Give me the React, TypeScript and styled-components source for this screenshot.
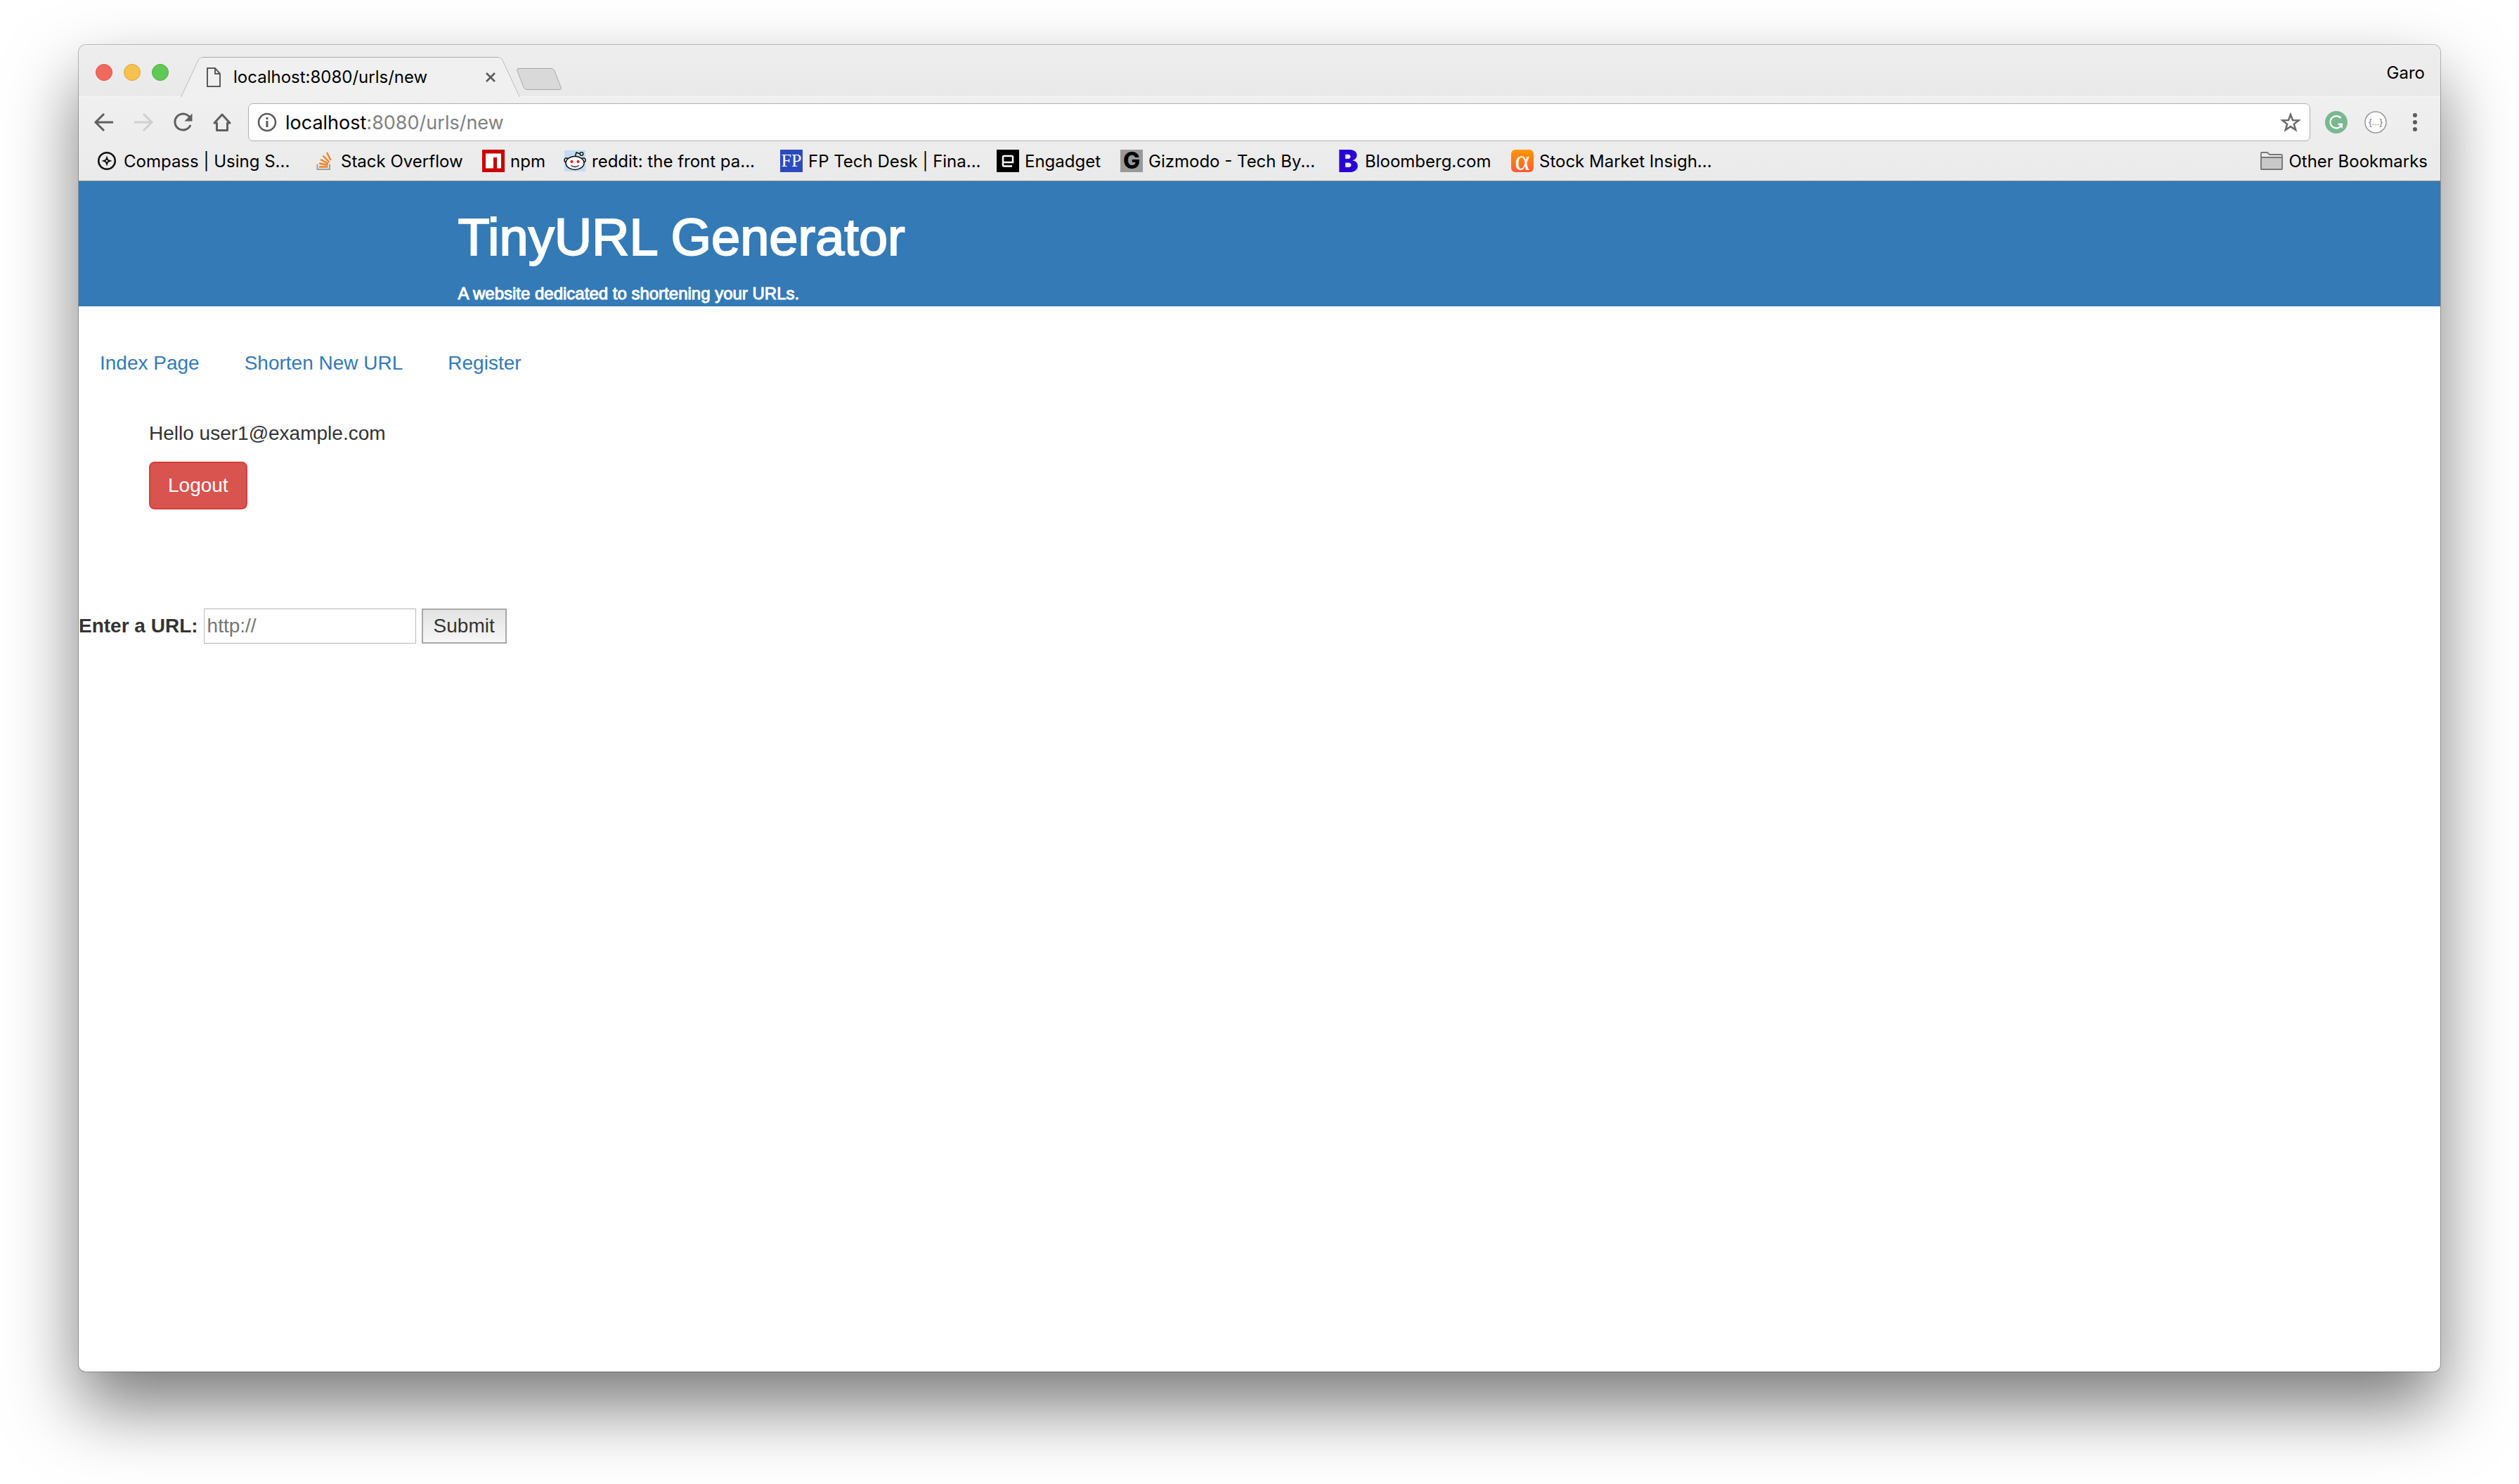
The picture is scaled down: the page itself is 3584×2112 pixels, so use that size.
import React from 'react';
import styled, { createGlobalStyle } from 'styled-components';

const uiFont = 'Inter, Roboto, sans-serif';
const pageFont = '"Helvetica Neue", "Liberation Sans", Arial, sans-serif';

const GlobalStyle = createGlobalStyle`
  *, *::before, *::after { box-sizing: border-box; }
  body { margin: 0; background: #fff; }
  button, input { font: inherit; margin: 0; }
`;

const Desktop = styled.div`
  min-height: 100vh;
  padding: 64px 112px 160px;
  display: flex;
`;

const BrowserWindow = styled.div`
  flex: 1;
  min-width: 0;
  display: flex;
  flex-direction: column;
  border-radius: 10px;
  overflow: hidden;
  background: #fff;
  box-shadow: 0 0 0 1px rgba(0, 0, 0, 0.25), 0 50px 100px rgba(0, 0, 0, 0.52);
`;

const TitleBar = styled.header`
  display: flex;
  align-items: flex-end;
  height: 74px;
  padding: 0 22px 0 24px;
  background: linear-gradient(#eeeeee, #e9e9e9);
  border-top: 1px solid #f6f6f6;
  border-bottom: 1px solid #f5f5f5;
  font-family: ${uiFont};
`;

const WindowButtons = styled.div`
  align-self: center;
  display: flex;
  gap: 16px;
  margin: 4px 17px 0 0;
`;

const WindowButton = styled.button<{ $fill: string; $edge: string }>`
  width: 24px;
  height: 24px;
  padding: 0;
  border: 1px solid ${(p) => p.$edge};
  border-radius: 50%;
  background: ${(p) => p.$fill};
`;

const Tab = styled.div`
  position: relative;
  display: flex;
  align-items: center;
  width: 483px;
  height: 57px;
  margin-bottom: -1px;
  padding: 0 35px 0 37px;

  &::before,
  &::after {
    content: '';
    position: absolute;
    top: 0;
    bottom: 0;
    width: 60%;
    background: #f0f0f0;
    border: 1px solid #a9a9a9;
    border-bottom: 0;
    transform-origin: bottom;
  }
  &::before {
    left: 0;
    border-right: 0;
    border-top-left-radius: 6px;
    transform: skewX(-25deg);
  }
  &::after {
    right: 0;
    border-left: 0;
    border-top-right-radius: 6px;
    transform: skewX(25deg);
  }
  & > * {
    position: relative;
    z-index: 1;
  }
`;

const TabTitle = styled.span`
  flex: 1;
  margin-left: 18px;
  font-size: 24px;
  line-height: 32px;
  color: #000;
`;

const IconButton = styled.button`
  display: flex;
  padding: 0;
  border: 0;
  background: none;
`;

const NewTab = styled.button`
  align-self: center;
  width: 54px;
  height: 31px;
  margin-top: 23px;
  padding: 0;
  border: 1px solid #a9a9a9;
  border-radius: 4px;
  background: #d9d9d9;
  transform: skewX(21deg);
`;

const Profile = styled.span`
  align-self: center;
  margin: 6px 0 0 auto;
  font-size: 24px;
  line-height: 32px;
  color: #000;
`;

const Chrome = styled.div`
  background: linear-gradient(#f0f0f0, #eaeaea);
  border-bottom: 1px solid #8a8a8a;
  font-family: ${uiFont};
`;

const Toolbar = styled.div`
  display: flex;
  align-items: center;
  padding: 9px 20px 0;
`;

const NavButtons = styled.div`
  display: flex;
  gap: 24px;
  margin-right: 21px;
`;

const Omnibox = styled.div`
  flex: 1;
  display: flex;
  align-items: center;
  height: 54px;
  padding: 0 12px;
  background: #fff;
  border: 1px solid #b0b0b0;
  border-radius: 7px;
`;

const Address = styled.span`
  flex: 1;
  margin-left: 12px;
  padding-top: 2px;
  font-size: 27px;
  line-height: 36px;
  color: #808080;
`;

const Host = styled.span`
  color: #000;
`;

const Extensions = styled.div`
  display: flex;
  align-items: center;
  gap: 24px;
  margin-left: 21px;
`;

const BookmarksBar = styled.nav`
  display: flex;
  align-items: center;
  height: 56px;
  padding: 0 18px 0 24px;
`;

const Bookmark = styled.a<{ $width?: number }>`
  display: flex;
  align-items: center;
  gap: 8px;
  flex: 0 0 ${(p) => (p.$width ? `${p.$width}px` : 'auto')};
  font-size: 24px;
  line-height: 32px;
  white-space: nowrap;
  color: #000;
  text-decoration: none;

  &:last-child {
    margin-left: auto;
  }
`;

const BookmarkLabel = styled.span`
  padding-top: 2px;
`;

const Tile = styled.span<{ $bg?: string; $fg?: string; $size: number; $face?: string; $weight?: number; $radius?: number; $line?: number }>`
  display: flex;
  align-items: center;
  justify-content: center;
  width: 32px;
  height: 32px;
  border-radius: ${(p) => p.$radius ?? 0}px;
  background: ${(p) => p.$bg ?? 'none'};
  color: ${(p) => p.$fg ?? '#fff'};
  font-family: ${(p) => p.$face ?? 'Inter'}, sans-serif;
  font-size: ${(p) => p.$size}px;
  font-weight: ${(p) => p.$weight ?? 400};
  line-height: ${(p) => p.$line ?? 32}px;
`;

const Page = styled.main`
  flex: 1;
  font-family: ${pageFont};
  font-size: 28px;
  line-height: 40px;
  color: #333;
`;

const Banner = styled.div`
  padding: 40px 16% 4px;
  background: #337ab7;
  color: #fff;
`;

const BannerInner = styled.div`
  padding-left: 2px;
`;

const Title = styled.h1`
  margin: 0 0 26px;
  font-size: 74px;
  line-height: 80px;
  font-weight: 400;
  -webkit-text-stroke: 2px #fff;
`;

const Tagline = styled.h2`
  margin: 0;
  font-size: 24px;
  line-height: 28px;
  font-weight: 400;
  -webkit-text-stroke: 1px #fff;
`;

const Menu = styled.nav`
  display: flex;
  gap: 4px;
  padding-top: 41px;
`;

const MenuLink = styled.a`
  padding: 20px 30px;
  color: #337ab7;
  text-decoration: none;
`;

const Account = styled.section`
  padding: 40px 100px 0;
`;

const Greeting = styled.p`
  margin: 0 0 20px;
`;

const Logout = styled.button`
  height: 68px;
  padding: 0 25px;
  border: 2px solid #d43f3a;
  border-radius: 8px;
  background: #d9534f;
  color: #fff;
`;

const ShortenForm = styled.form`
  display: flex;
  align-items: center;
  gap: 8px;
  margin-top: 141px;
`;

const UrlLabel = styled.label`
  font-weight: 700;
`;

const UrlInput = styled.input`
  width: 302px;
  height: 50px;
  padding: 0 4px;
  border: 1px solid #b8b8b8;
  color: #333;

  &::placeholder {
    color: #757575;
  }
`;

const Submit = styled.button`
  height: 50px;
  padding: 0 15px;
  border: 2px solid #a9a9a9;
  background: linear-gradient(#e2e2e2, #f7f7f7);
  color: #333;
`;

const DocIcon = () => (
  <svg width="20" height="28" viewBox="0 0 20 28" fill="none" stroke="#5a5a5a" strokeWidth="2">
    <path d="M1 1h11l7 8v18H1z" />
    <path d="M12 1v8h7" />
  </svg>
);

const CloseIcon = () => (
  <svg width="14" height="14" viewBox="0 0 14 14" stroke="#5a5a5a" strokeWidth="2.500">
    <path d="M1 1l12 12M13 1L1 13" />
  </svg>
);

const BackIcon = () => (
  <svg width="32" height="32" viewBox="0 0 32 32" fill="none" stroke="#5f5f5f" strokeWidth="3">
    <path d="M16 4L4 16l12 12M4 16h25" />
  </svg>
);

const ForwardIcon = () => (
  <svg width="32" height="32" viewBox="0 0 32 32" fill="none" stroke="#d0d0d0" strokeWidth="3">
    <path d="M16 4l12 12-12 12M28 16H3" />
  </svg>
);

const ReloadIcon = () => (
  <svg width="32" height="32" viewBox="0 0 32 32" fill="none">
    <path d="M25.500 8.500A11.500 11.500 0 1 0 27 20" stroke="#5f5f5f" strokeWidth="3" />
    <path d="M29.500 3.500v11h-11z" fill="#5f5f5f" />
  </svg>
);

const HomeIcon = () => (
  <svg width="32" height="32" viewBox="0 0 32 32" fill="none" stroke="#5f5f5f" strokeWidth="3" strokeLinejoin="round">
    <path d="M16 5L5 17h3.500v10.500h15V17H27z" />
  </svg>
);

const InfoIcon = () => (
  <svg width="28" height="28" viewBox="0 0 28 28" fill="none" stroke="#5a5a5a">
    <circle cx="14" cy="14" r="12" strokeWidth="2.500" />
    <path d="M14 12v9" strokeWidth="3" />
    <path d="M14 7v3" strokeWidth="3" />
  </svg>
);

const StarIcon = () => (
  <svg width="30" height="30" viewBox="0 0 30 30" fill="none" stroke="#6a6a6a" strokeWidth="2.500">
    <path d="M15 4l3 8 8.600.300-6.800 5.300 2.400 8.300-7.200-4.800-7.200 4.800 2.400-8.300-6.800-5.300L12 12z" />
  </svg>
);

const GrammarIcon = () => (
  <svg width="32" height="32" viewBox="0 0 32 32" fill="none">
    <circle cx="16" cy="16" r="16" fill="#78b98f" />
    <path d="M22.500 10A8.600 8.600 0 1 0 24 19h-5.500" stroke="#fff" strokeWidth="2.200" />
    <path d="M25 17.500v7.500l-3-2.500-2.500-5z" fill="#fff" />
  </svg>
);

const BracesIcon = () => (
  <svg width="32" height="32" viewBox="0 0 32 32">
    <circle cx="16" cy="16" r="15" fill="#fff" stroke="#999" strokeWidth="1.500" />
    <text x="16" y="20" textAnchor="middle" fontFamily="Liberation Sans, sans-serif" fontSize="13" fill="#777">{'{...}'}</text>
  </svg>
);

const MoreIcon = () => (
  <svg width="32" height="32" viewBox="0 0 32 32" fill="#5a5a5a">
    <circle cx="16" cy="6" r="3" />
    <circle cx="16" cy="16" r="3" />
    <circle cx="16" cy="26" r="3" />
  </svg>
);

const CompassIcon = () => (
  <svg width="32" height="32" viewBox="0 0 32 32">
    <circle cx="16" cy="16" r="11.800" fill="none" stroke="#111" strokeWidth="2.500" />
    <path d="M16 8.500l2 5.500 5.500 2-5.500 2-2 5.500-2-5.500-5.500-2 5.500-2z" fill="#111" />
    <circle cx="16" cy="16" r="1.300" fill="#eee" />
  </svg>
);

const StackIcon = () => (
  <svg width="32" height="32" viewBox="0 0 32 32" fill="none">
    <path d="M6.500 20.500v7.500h17.500v-7.500" stroke="#9aa0aa" strokeWidth="2" />
    <g stroke="#f48024" strokeWidth="2.400">
      <path d="M9 24.500h12.500M9.200 19.500l12.300 2.500M11 14l11 6M14.500 8.500l9 9.500M20 4l5.500 11" />
    </g>
  </svg>
);

const NpmIcon = () => (
  <svg width="32" height="32" viewBox="0 0 32 32">
    <path fill="#cb0000" d="M0 0h32v32H0z" />
    <path fill="#fff" d="M5 5.500h22v21h-6V11h-5v15.500H5z" />
  </svg>
);

const RedditIcon = () => (
  <svg width="32" height="32" viewBox="0 0 32 32" stroke="#111" strokeWidth="1.500">
    <path d="M1 1h30v30H1z" fill="#c3dcf5" stroke="none" />
    <circle cx="4" cy="15" r="3" fill="#fff" />
    <circle cx="28" cy="15" r="3" fill="#fff" />
    <path d="M16 11l2-7 6 2" fill="none" />
    <circle cx="25.500" cy="6" r="2.200" fill="#fff" />
    <ellipse cx="16" cy="19" rx="13" ry="9.500" fill="#fff" />
    <g fill="#f00" stroke="none">
      <circle cx="11.500" cy="17" r="2" />
      <circle cx="20.500" cy="17" r="2" />
    </g>
    <path d="M10.500 22.500q5.500 4 11 0" fill="none" />
  </svg>
);

const EngadgetIcon = () => (
  <svg width="32" height="32" viewBox="0 0 32 32" fill="none">
    <path fill="#000" d="M0 0h32v32H0z" />
    <path d="M22 23.500H10.500a1.500 1.500 0 0 1-1.500-1.500V10.500A1.500 1.500 0 0 1 10.500 9h11a1.500 1.500 0 0 1 1.500 1.500V18H9" stroke="#fff" strokeWidth="2.500" />
  </svg>
);

const FolderIcon = () => (
  <svg width="32" height="26" viewBox="0 0 32 26" stroke="#777" strokeWidth="1.800">
    <path d="M1 24V2q0-1 1-1h8l3 3h17q1 0 1 1v19q0 1-1 1H2q-1 0-1-1z" fill="#ececec" />
    <path d="M1 8h30v16q0 1-1 1H2q-1 0-1-1z" fill="#c8c8c8" />
  </svg>
);

const bookmarks = [
  { label: 'Compass | Using S...', width: 309, icon: <CompassIcon /> },
  { label: 'Stack Overflow', width: 241, icon: <StackIcon /> },
  { label: 'npm', width: 116, icon: <NpmIcon /> },
  { label: 'reddit: the front pa...', width: 308, icon: <RedditIcon /> },
  {
    label: 'FP Tech Desk | Fina...',
    width: 308,
    icon: <Tile $bg="#2b4bbd" $size={26} $face="Liberation Serif">FP</Tile>,
  },
  { label: 'Engadget', width: 176, icon: <EngadgetIcon /> },
  {
    label: 'Gizmodo - Tech By...',
    width: 308,
    icon: <Tile $bg="#999" $fg="#000" $size={32} $weight={800}>G</Tile>,
  },
  {
    label: 'Bloomberg.com',
    width: 248,
    icon: <Tile $fg="#2800d7" $size={44} $weight={900}>B</Tile>,
  },
  {
    label: 'Stock Market Insigh...',
    width: 308,
    icon: (
      <Tile $bg="linear-gradient(#ff9800, #ff5a36)" $size={40} $face="Liberation Serif" $radius={6} $line={24}>α</Tile>
    ),
  },
];

export default function App() {
  return (
    <>
      <GlobalStyle />
      <Desktop>
        <BrowserWindow>
          <TitleBar>
            <WindowButtons>
              <WindowButton aria-label="Close window" $fill="#f0695f" $edge="#dc5349" />
              <WindowButton aria-label="Minimize window" $fill="#f7c150" $edge="#dfa53a" />
              <WindowButton aria-label="Zoom window" $fill="#60c955" $edge="#4aaf3f" />
            </WindowButtons>
            <Tab>
              <DocIcon />
              <TabTitle>localhost:8080/urls/new</TabTitle>
              <IconButton aria-label="Close tab"><CloseIcon /></IconButton>
            </Tab>
            <NewTab aria-label="New tab" />
            <Profile>Garo</Profile>
          </TitleBar>
          <Chrome>
            <Toolbar>
              <NavButtons>
                <IconButton aria-label="Back"><BackIcon /></IconButton>
                <IconButton aria-label="Forward"><ForwardIcon /></IconButton>
                <IconButton aria-label="Reload"><ReloadIcon /></IconButton>
                <IconButton aria-label="Home"><HomeIcon /></IconButton>
              </NavButtons>
              <Omnibox>
                <InfoIcon />
                <Address><Host>localhost</Host>:8080/urls/new</Address>
                <IconButton aria-label="Bookmark this page"><StarIcon /></IconButton>
              </Omnibox>
              <Extensions>
                <IconButton aria-label="Grammar checker"><GrammarIcon /></IconButton>
                <IconButton aria-label="JSON viewer"><BracesIcon /></IconButton>
                <IconButton aria-label="Menu"><MoreIcon /></IconButton>
              </Extensions>
            </Toolbar>
            <BookmarksBar>
              {bookmarks.map((b) => (
                <Bookmark key={b.label} href="#" $width={b.width}>
                  {b.icon}
                  <BookmarkLabel>{b.label}</BookmarkLabel>
                </Bookmark>
              ))}
              <Bookmark href="#">
                <FolderIcon />
                <BookmarkLabel>Other Bookmarks</BookmarkLabel>
              </Bookmark>
            </BookmarksBar>
          </Chrome>
          <Page>
            <Banner>
              <BannerInner>
                <Title>TinyURL Generator</Title>
                <Tagline>A website dedicated to shortening your URLs.</Tagline>
              </BannerInner>
            </Banner>
            <Menu>
              <MenuLink href="#">Index Page</MenuLink>
              <MenuLink href="#">Shorten New URL</MenuLink>
              <MenuLink href="#">Register</MenuLink>
            </Menu>
            <Account>
              <Greeting>Hello user1@example.com</Greeting>
              <Logout type="button">Logout</Logout>
            </Account>
            <ShortenForm onSubmit={(e) => e.preventDefault()}>
              <UrlLabel htmlFor="long-url">Enter a URL:</UrlLabel>
              <UrlInput id="long-url" type="text" placeholder="http://" />
              <Submit type="submit">Submit</Submit>
            </ShortenForm>
          </Page>
        </BrowserWindow>
      </Desktop>
    </>
  );
}
